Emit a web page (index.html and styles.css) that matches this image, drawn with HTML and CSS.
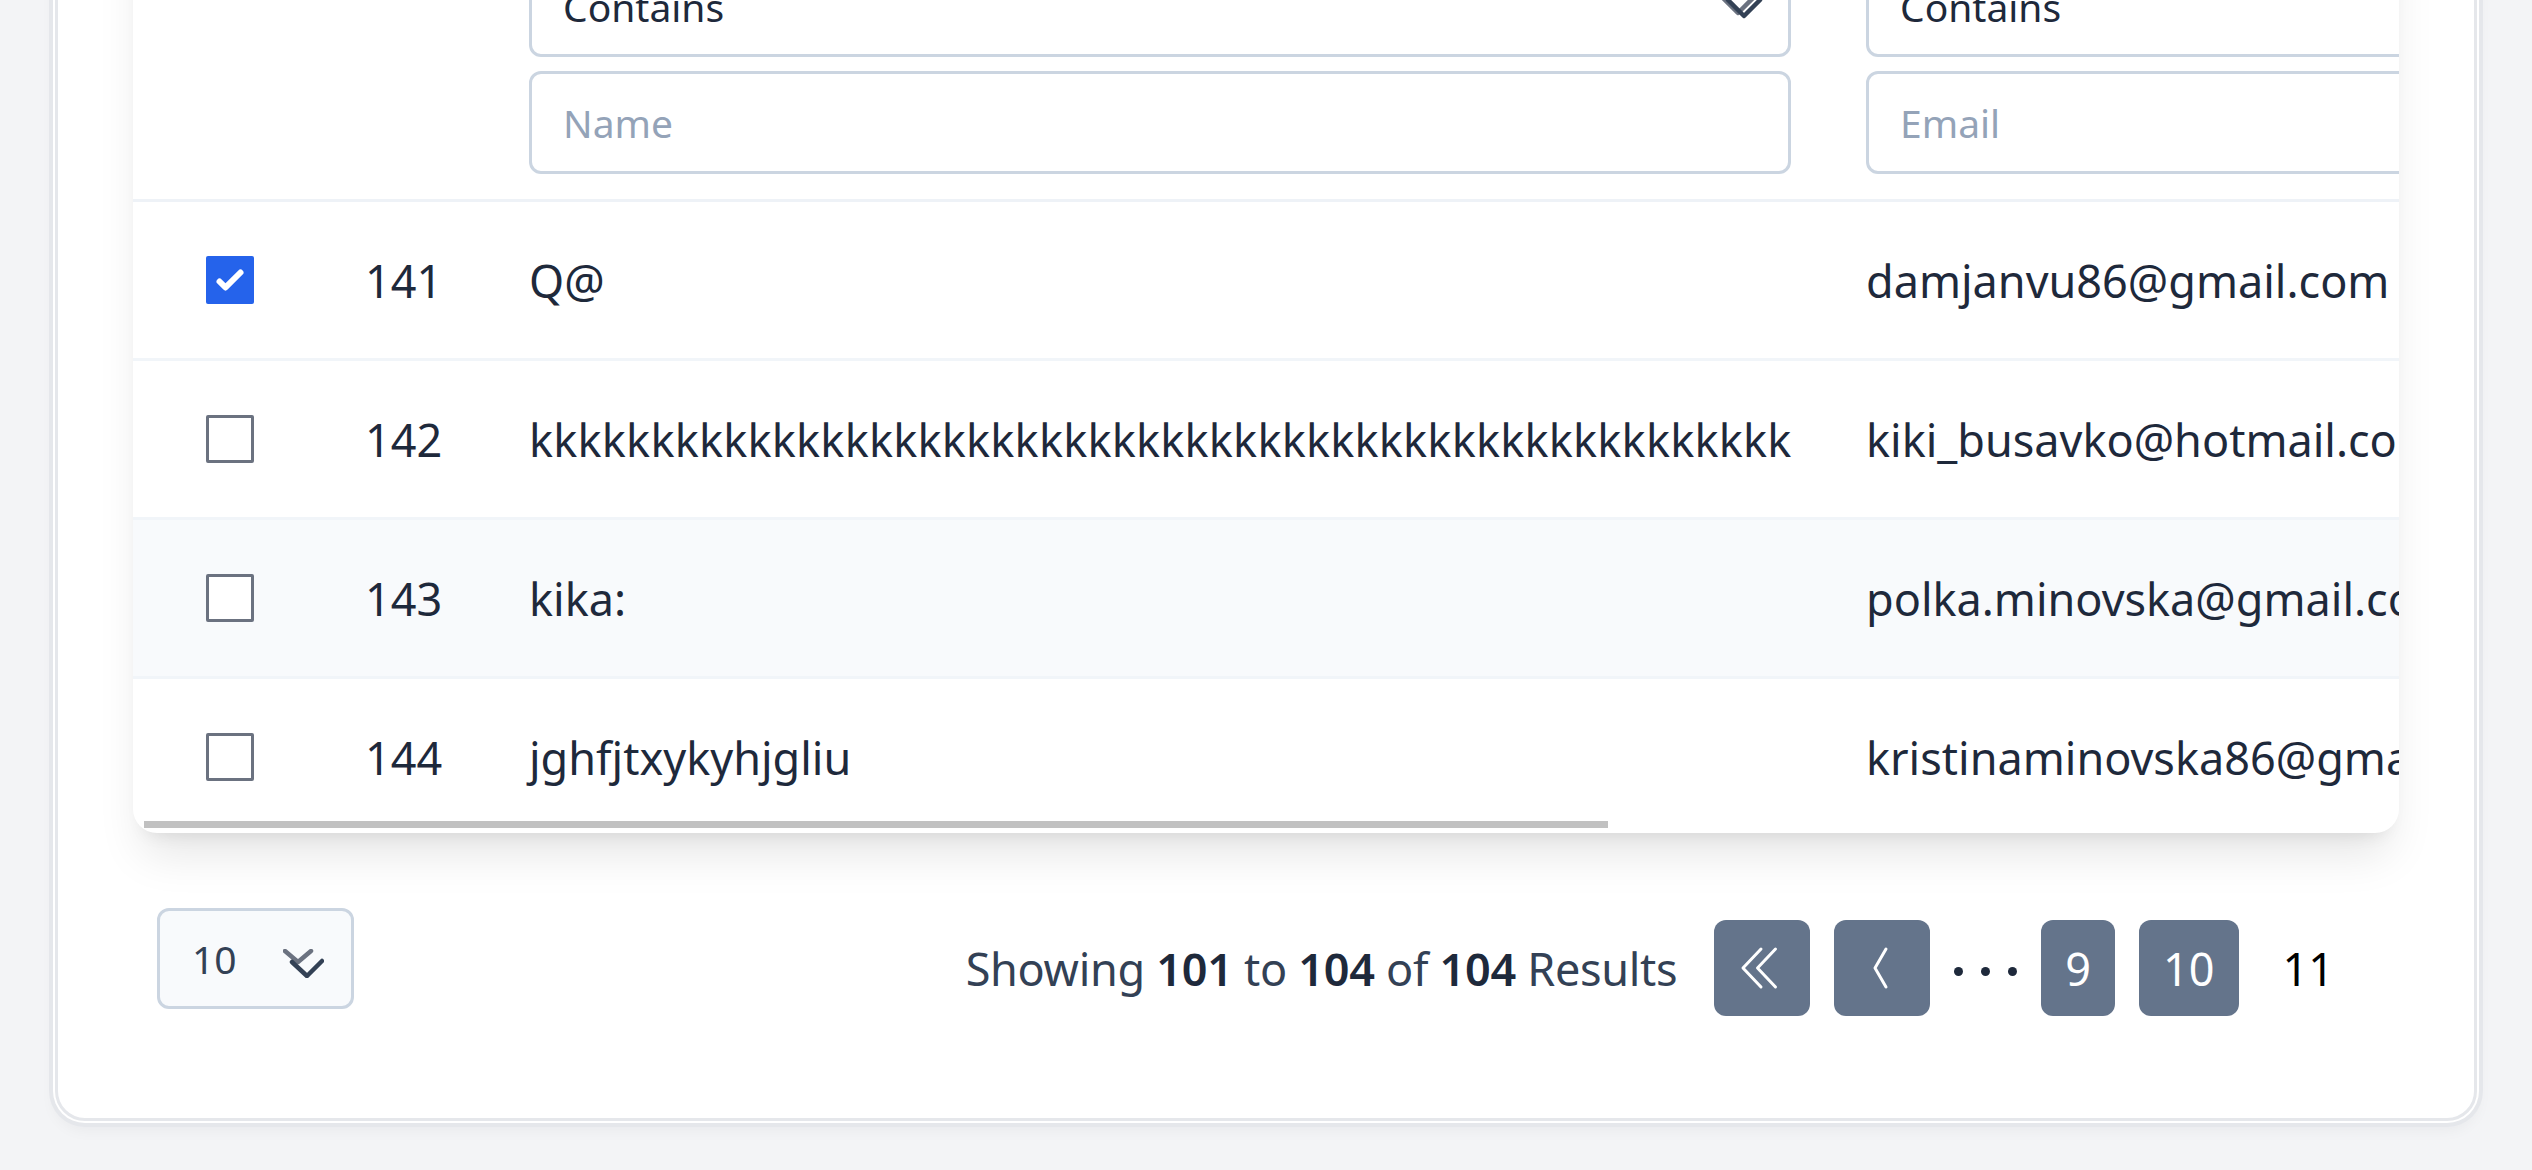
FILE: index.html
```html
<!DOCTYPE html>
<html lang="en">
<head>
<meta charset="utf-8">
<title>Users</title>
<link rel="stylesheet" href="styles.css">
</head>
<body>
<main class="panel">
  <div class="table-card">
    <div class="table">
      <div class="thead">
        <div class="cell"></div>
        <div class="cell"></div>
        <div class="cell filter">
          <div class="select">Contains
            <svg class="chev-head" width="48" height="40" viewBox="0 0 48 40" fill="none" stroke-width="4.5" stroke-linecap="round" stroke-linejoin="round"><polyline points="6,17 22,33 38,17" stroke="#6b7280"/><polyline points="12,20 28,36 44,20" stroke="#334155"/></svg>
          </div>
          <div class="input">Name</div>
        </div>
        <div class="cell filter">
          <div class="select">Contains
            <svg class="chev-head" width="48" height="40" viewBox="0 0 48 40" fill="none" stroke-width="4.5" stroke-linecap="round" stroke-linejoin="round"><polyline points="6,17 22,33 38,17" stroke="#6b7280"/><polyline points="12,20 28,36 44,20" stroke="#334155"/></svg>
          </div>
          <div class="input">Email</div>
        </div>
      </div>

      <div class="row">
        <div class="check-cell"><span class="checkbox checked"><svg viewBox="0 0 16 16" width="48" height="48" fill="#fff"><path d="M12.207 4.793a1 1 0 010 1.414l-5 5a1 1 0 01-1.414 0l-2-2a1 1 0 011.414-1.414L6.5 9.086l4.293-4.293a1 1 0 011.414 0z"/></svg></span></div>
        <div class="cell">141</div>
        <div class="cell">Q@</div>
        <div class="cell">damjanvu86@gmail.com</div>
      </div>
      <div class="row">
        <div class="check-cell"><span class="checkbox"></span></div>
        <div class="cell">142</div>
        <div class="cell long">kkkkkkkkkkkkkkkkkkkkkkkkkkkkkkkkkkkkkkkkkkkkkkkkkkkk</div>
        <div class="cell">kiki_busavko@hotmail.com</div>
      </div>
      <div class="row alt">
        <div class="check-cell"><span class="checkbox"></span></div>
        <div class="cell">143</div>
        <div class="cell">kika:</div>
        <div class="cell">polka.minovska@gmail.com</div>
      </div>
      <div class="row">
        <div class="check-cell"><span class="checkbox"></span></div>
        <div class="cell">144</div>
        <div class="cell">jghfjtxykyhjgliu</div>
        <div class="cell">kristinaminovska86@gmail.com</div>
      </div>
    </div>
    <div class="scroll-thumb"></div>
  </div>

  <footer class="pager">
    <div class="per-page">10
      <svg class="chev-select" width="41" height="29" viewBox="0 0 41 29" fill="none" stroke-width="4.5" stroke-linecap="round" stroke-linejoin="round"><polyline points="2,2 15,13 28,2" stroke="#6b7280"/><polyline points="9,13 24,27 39,12" stroke="#334155"/></svg>
    </div>
    <div class="pages">
      <p class="summary">Showing <b>101</b> to <b>104</b> of <b>104</b> Results</p>
      <span class="pbtn icon"><svg width="96" height="96" viewBox="0 0 96 96" fill="none" stroke="#fff" stroke-width="3" stroke-linecap="round" stroke-linejoin="round"><polyline points="47,29 29,48 47,67"/><polyline points="61.5,29 43.5,48 61.5,67"/></svg></span>
      <span class="pbtn icon"><svg width="96" height="96" viewBox="0 0 96 96" fill="none" stroke="#fff" stroke-width="3" stroke-linecap="round" stroke-linejoin="round"><polyline points="52,29 41,48 52,67"/></svg></span>
      <span class="dots"><i></i><i></i><i></i></span>
      <span class="pbtn">9</span>
      <span class="pbtn">10</span>
      <span class="pbtn current">11</span>
    </div>
  </footer>
</main>
</body>
</html>
```

FILE: styles.css
```css
* { box-sizing: border-box; }

html, body {
  margin: 0;
  height: 1170px;
  overflow: hidden;
}

body {
  background: #f3f4f6;
  font-family: "Noto Sans", "Open Sans", sans-serif;
  color: #1e293b;
}

.panel {
  margin: -184px 55px 0;
  background: #fff;
  border: 3px solid #e5e7eb;
  border-radius: 30px;
  box-shadow: 0 0 0 2px #fff, 0 0 0 6px #e5e7eb, 0 8px 16px rgba(15, 23, 42, 0.05);
  padding: 75px 75px 0;
}

.table-card {
  position: relative;
  height: 939px;
  background: #fff;
  border-radius: 24px;
  overflow: hidden;
  box-shadow: 0 30px 45px -9px rgba(0, 0, 0, 0.1), 0 12px 18px -12px rgba(0, 0, 0, 0.1);
}

.table {
  width: max-content;
}

.thead,
.row {
  display: grid;
  grid-template-columns: 232px 164px 1337px 1337px;
}

.thead {
  padding: 61px 0 25px;
  border-bottom: 3px solid #eef2f7;
}

.filter {
  display: flex;
  flex-direction: column;
  gap: 14px;
}

.select,
.input {
  position: relative;
  display: flex;
  align-items: center;
  width: 1262px;
  border: 3px solid #cbd5e1;
  border-radius: 12px;
  background: #fff;
  padding: 0 31px;
  font-size: 39px;
}

.select {
  height: 102px;
  color: #1e293b;
}

.input {
  height: 103px;
  color: #94a3b8;
}

.chev-head {
  position: absolute;
  left: 1184px;
  top: 22px;
}

.row {
  height: 159px;
  align-items: center;
  border-bottom: 3px solid #f1f5f9;
  font-size: 45px;
  color: #1e293b;
  white-space: nowrap;
}

.row.alt {
  background: #f8fafc;
}

.cell.long {
  letter-spacing: 0.25px;
}

.check-cell {
  display: flex;
  padding-left: 73px;
}

.checkbox {
  display: block;
  width: 48px;
  height: 48px;
  border: 3px solid #6b7280;
  border-radius: 2px;
  background: #fff;
}

.checkbox.checked {
  border: 0;
  background: #2563eb;
}

.checkbox svg {
  display: block;
}

.scroll-thumb {
  position: absolute;
  left: 11px;
  bottom: 5px;
  width: 1464px;
  height: 7px;
  background: #c1c1c1;
}

.pager {
  display: flex;
  justify-content: space-between;
  align-items: flex-start;
  padding: 75px 45px 102px 24px;
}

.per-page {
  position: relative;
  display: flex;
  align-items: center;
  width: 197px;
  height: 101px;
  padding-left: 32px;
  border: 3px solid #cbd5e1;
  border-radius: 12px;
  background: #f8fafc;
  font-size: 39px;
  color: #334155;
}

.chev-select {
  position: absolute;
  left: 123px;
  top: 38px;
}

.pages {
  display: flex;
  align-items: center;
  gap: 24px;
  height: 96px;
  margin-top: 12px;
}

.summary {
  margin: 0 13px 0 0;
  font-size: 45px;
  letter-spacing: -0.3px;
  color: #334155;
}

.summary b {
  font-weight: 600;
  color: #1e293b;
}

.pbtn {
  display: flex;
  align-items: center;
  justify-content: center;
  height: 96px;
  padding: 0 24px;
  border-radius: 12px;
  background: #64748b;
  color: #fff;
  font-size: 45px;
}

.pbtn.icon {
  width: 96px;
  padding: 0;
}

.pbtn.current {
  background: transparent;
  color: #000;
  padding: 0 20px;
}

.dots {
  display: flex;
  gap: 18px;
  margin-top: 6px;
}

.dots i {
  display: block;
  width: 9px;
  height: 9px;
  border-radius: 50%;
  background: #1e293b;
}
```
